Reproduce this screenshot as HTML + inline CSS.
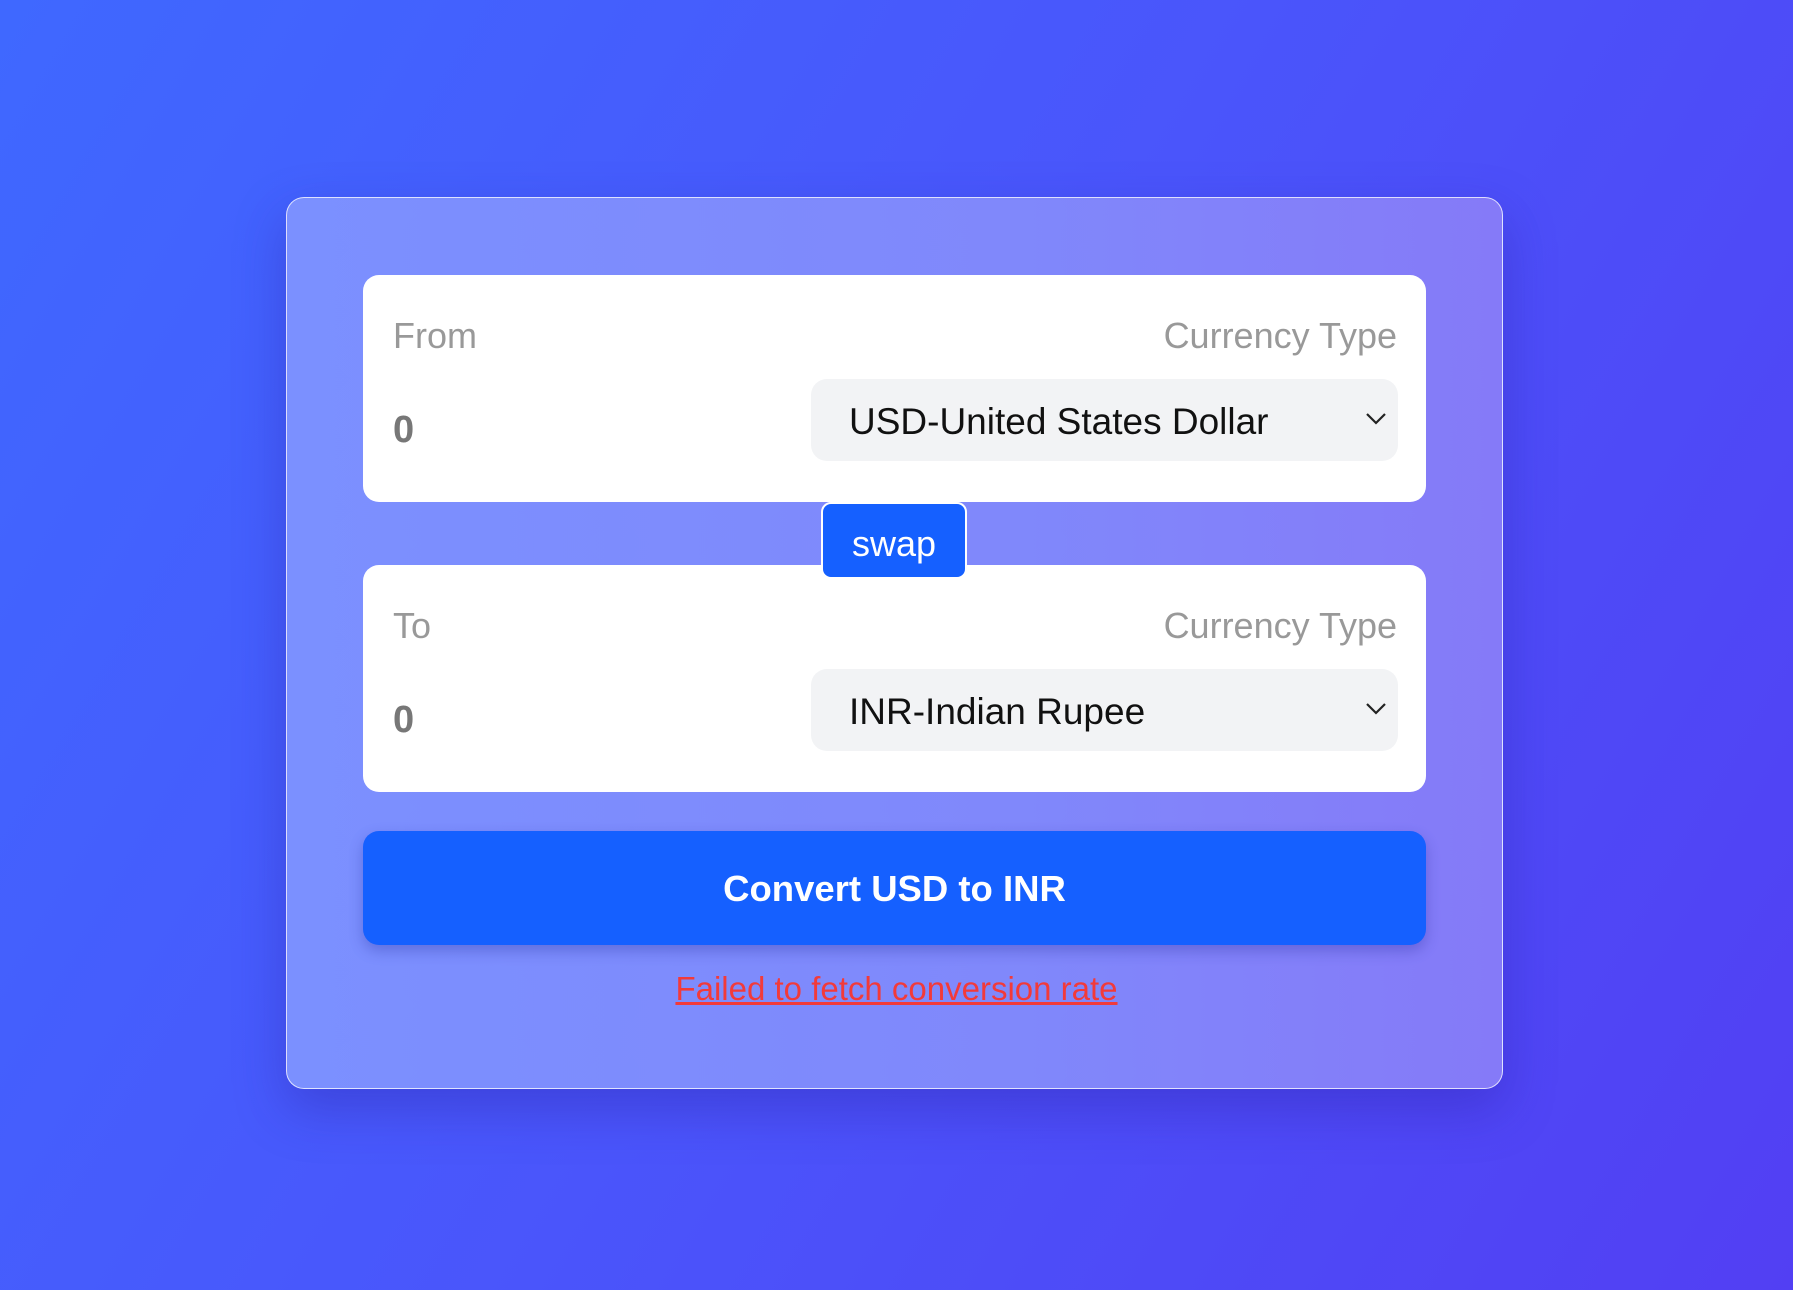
<!DOCTYPE html>
<html><head><meta charset="utf-8"><style>
*{box-sizing:border-box;margin:0;padding:0}
html,body{width:1793px;height:1290px;overflow:hidden}
body{background:linear-gradient(120deg,#3f68ff 0%,#4a55fb 50%,#523ff3 100%);font-family:"Liberation Sans",sans-serif;position:relative}
.card{position:absolute;left:286px;top:197px;width:1217px;height:892px;border-radius:18px;border:1.5px solid rgba(255,255,255,.75);background:linear-gradient(90deg,#7b90ff 0%,#8088fb 60%,#857af8 100%);box-shadow:0 20px 50px rgba(40,30,160,.35)}
.box{position:absolute;left:363px;width:1063px;height:227px;background:#fff;border-radius:16px}
.lbl{position:absolute;font-size:36px;color:#999;top:40px}
.lbl.l{left:30px}.lbl.r{right:29px}
.num{position:absolute;left:30px;top:135px;font-size:38px;color:#777;font-weight:bold;line-height:40px}
.sel{position:absolute;left:448px;top:104px;width:587px;height:82px;background:#f2f3f5;border-radius:16px;font-size:37px;color:#111;line-height:86px;padding-left:38px}
.sel svg{position:absolute;right:10px;top:32px}
.swap{position:absolute;left:821px;top:502px;width:146px;height:77px;background:#1560ff;border:2.5px solid #fff;border-radius:10px;color:#fff;font-size:36px;text-align:center;line-height:80px;z-index:2}
.btn{position:absolute;left:363px;top:831px;width:1063px;height:114px;background:#1560ff;border-radius:16px;color:#fff;font-weight:bold;font-size:36.5px;text-align:center;line-height:116px;box-shadow:0 6px 14px rgba(30,40,150,.3)}
.err{position:absolute;left:0;width:1793px;top:970px;text-align:center;color:#f23a3a;font-size:33px;text-decoration:underline}
</style></head><body>
<div class="card"></div>
<div class="box" style="top:275px">
<div class="lbl l">From</div><div class="lbl r">Currency Type</div>
<div class="num">0</div>
<div class="sel">USD-United States Dollar<svg width="24" height="16" viewBox="0 0 24 16"><path d="M3 3l9 9 9-9" fill="none" stroke="#222" stroke-width="2.2"/></svg></div>
</div>
<div class="swap">swap</div>
<div class="box" style="top:565px">
<div class="lbl l">To</div><div class="lbl r">Currency Type</div>
<div class="num">0</div>
<div class="sel">INR-Indian Rupee<svg width="24" height="16" viewBox="0 0 24 16"><path d="M3 3l9 9 9-9" fill="none" stroke="#222" stroke-width="2.2"/></svg></div>
</div>
<div class="btn">Convert USD to INR</div>
<div class="err">Failed to fetch conversion rate</div>
</body></html>
